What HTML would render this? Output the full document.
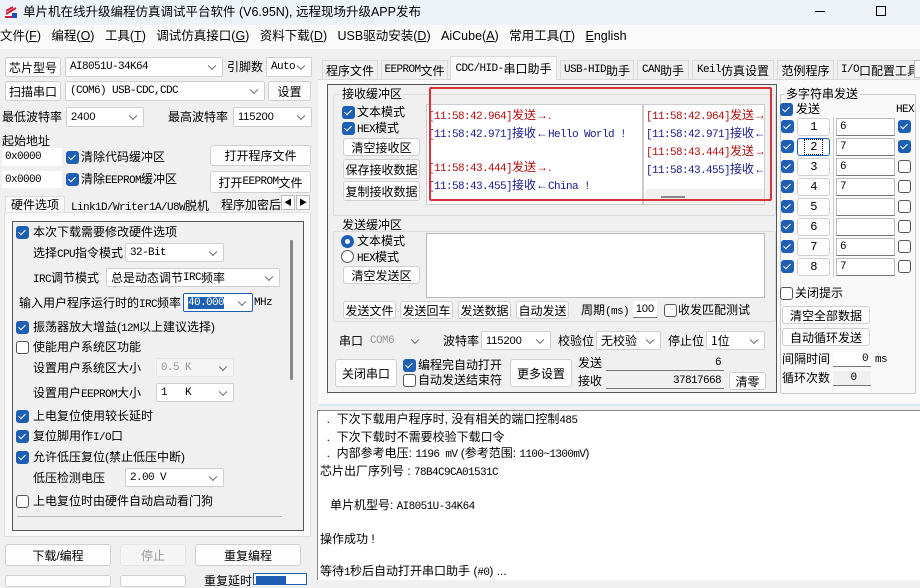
<!DOCTYPE html>
<html><head><meta charset="utf-8"><style>
*{box-sizing:border-box;margin:0;padding:0}
body{width:920px;height:580px;overflow:hidden;background:#f0f0f0;position:relative;font-family:"Liberation Sans","Noto Sans CJK SC",sans-serif;font-size:12px;color:#000}
.a{position:absolute;white-space:nowrap;line-height:1}
.m{font-family:"Liberation Mono","Noto Serif CJK SC",monospace;font-size:11px;letter-spacing:-0.6px}
.n{font-family:"Liberation Mono",monospace;font-size:11px;letter-spacing:-0.6px}
.btn{position:absolute;background:#fdfdfd;border:1px solid #d0d0d0;border-radius:3px;text-align:center;white-space:nowrap;font-size:12px;display:flex;align-items:center;justify-content:center}
.sel{position:absolute;background:#fff;border:1px solid #cfcfcf;border-radius:2px;padding-left:4px;display:flex;align-items:center;white-space:nowrap;font-family:"Liberation Mono","Noto Serif CJK SC",monospace;font-size:11px;letter-spacing:-0.6px}
.sel:after{content:"";position:absolute;right:7px;top:50%;width:5px;height:5px;border-right:1px solid #666;border-bottom:1px solid #666;transform:translateY(-70%) rotate(45deg)}
.dis{background:#f5f5f5;color:#999}
.inp{position:absolute;background:#fff;border:1px solid #bbb;border-bottom-color:#777;padding-left:3px;display:flex;align-items:center;font-family:"Liberation Mono",monospace;font-size:11px;letter-spacing:-0.6px}
.cb{position:absolute;width:13px;height:13px;border-radius:3px;background:#1e5fb4}
.cb:after{content:"";position:absolute;left:4px;top:2px;width:3px;height:6px;border-right:1.5px solid #fff;border-bottom:1.5px solid #fff;transform:rotate(45deg)}
.cb0{position:absolute;width:13px;height:13px;border-radius:3px;background:#fff;border:1px solid #555}
.grp{position:absolute;border:1px solid #dcdcdc;border-radius:2px}
.gl{position:absolute;background:#f0f0f0;padding:0 2px;line-height:1}
.tab{position:absolute;top:60px;height:19px;border:1px solid #dadada;border-bottom:none;background:#f0f0f0;display:flex;align-items:center;justify-content:center;font-size:12px;white-space:nowrap;overflow:hidden}
.w{background:#fff}
.red{color:#b01010}.blu{color:#1a1a8a}
</style></head><body>
<!-- title -->
<div class="a" style="left:0;top:0;width:920px;height:25px;background:#eef3f9"></div>
<svg class="a" style="left:4px;top:5px" width="14" height="14"><path d="M1 12 L13 12 M2 9 L12 3 M2 6 L9 2" stroke="#d02040" stroke-width="2"/><rect x="8" y="8" width="5" height="5" fill="#2050c0"/></svg>
<div class="a" style="left:23px;top:6px;font-size:12.5px">单片机在线升级编程仿真调试平台软件 (V6.95N), 远程现场升级APP发布</div>
<div class="a" style="left:815px;top:11px;width:10px;height:1px;background:#000"></div>
<div class="a" style="left:876px;top:6px;width:10px;height:10px;border:1px solid #000"></div>
<!-- menu -->
<div class="a" style="left:0;top:25px;width:920px;height:24px;background:#fafafa"></div>
<div class="a" style="left:0;top:30px;font-size:12.5px">文件(<u>F</u>)&nbsp;&nbsp;&nbsp;编程(<u>O</u>)&nbsp;&nbsp;&nbsp;工具(<u>T</u>)&nbsp;&nbsp;&nbsp;调试仿真接口(<u>G</u>)&nbsp;&nbsp;&nbsp;资料下载(<u>D</u>)&nbsp;&nbsp;&nbsp;USB驱动安装(<u>D</u>)&nbsp;&nbsp;&nbsp;AiCube(<u>A</u>)&nbsp;&nbsp;&nbsp;常用工具(<u>T</u>)&nbsp;&nbsp;&nbsp;<u>E</u>nglish</div>

<!-- left top -->
<div class="btn" style="left:5px;top:57px;width:56px;height:20px">芯片型号</div>
<div class="sel" style="left:65px;top:57px;width:158px;height:20px">AI8051U-34K64</div>
<div class="a" style="left:227px;top:61px">引脚数</div>
<div class="sel" style="left:266px;top:57px;width:46px;height:20px">Auto</div>
<div class="btn" style="left:5px;top:81px;width:56px;height:20px">扫描串口</div>
<div class="sel" style="left:65px;top:81px;width:200px;height:20px">(COM6) USB-CDC,CDC</div>
<div class="btn" style="left:268px;top:81px;width:43px;height:20px">设置</div>
<div class="a" style="left:2px;top:111px">最低波特率</div>
<div class="sel" style="left:66px;top:107px;width:78px;height:20px;font-family:'Liberation Sans';font-size:11px;letter-spacing:0">2400</div>
<div class="a" style="left:168px;top:111px">最高波特率</div>
<div class="sel" style="left:233px;top:107px;width:79px;height:20px;font-family:'Liberation Sans';font-size:11px;letter-spacing:0">115200</div>
<div class="a" style="left:2px;top:135px">起始地址</div>
<div class="inp" style="left:2px;top:148px;width:60px;height:18px;border:none;background:#fff">0x0000</div>
<div class="cb" style="left:66px;top:151px"></div>
<div class="a" style="left:81px;top:151px">清除代码缓冲区</div>
<div class="btn" style="left:210px;top:145px;width:101px;height:21px">打开程序文件</div>
<div class="inp" style="left:2px;top:171px;width:60px;height:17px;border:none">0x0000</div>
<div class="cb" style="left:66px;top:173px"></div>
<div class="a" style="left:81px;top:173px">清除<span class="m">EEPROM</span>缓冲区</div>
<div class="btn" style="left:210px;top:171px;width:101px;height:22px">打开<span class="m">EEPROM</span>文件</div>
<!-- left tabs -->
<div class="a" style="left:5px;top:196px;width:60px;height:17px;background:#fafafa;border:1px solid #ddd;border-bottom:none;text-align:center;padding-top:2px">硬件选项</div>
<div class="a m" style="left:71px;top:200px">Link1D/Writer1A/U8W<span style="font-size:12px;font-family:'Noto Sans CJK SC';letter-spacing:0">脱机</span></div>
<div class="a" style="left:221px;top:199px;width:60px;overflow:hidden">程序加密后</div>
<div class="a" style="left:281px;top:195px;width:14px;height:15px;border:1px solid #bbb;background:#fff;font-size:8px;text-align:center;padding-top:3px">◀</div>
<div class="a" style="left:296px;top:195px;width:14px;height:15px;border:1px solid #bbb;background:#fff;font-size:8px;text-align:center;padding-top:3px">▶</div>
<div class="a" style="left:4px;top:212px;width:307px;height:325px;background:#fafafa;border:1px solid #e0e0e0"></div>
<div class="a" style="left:12px;top:221px;width:292px;height:310px;border:1px solid #555;background:#f0f0f0"></div>
<div class="a" style="left:290px;top:240px;width:3px;height:140px;background:#888;border-radius:1px"></div>
<div class="cb" style="left:16px;top:226px"></div><div class="a" style="left:33px;top:226px">本次下载需要修改硬件选项</div>
<div class="a" style="left:33px;top:247px">选择<span class="m">CPU</span>指令模式</div><div class="sel" style="left:125px;top:243px;width:99px;height:19px">32-Bit</div>
<div class="a" style="left:33px;top:272px"><span class="m">IRC</span>调节模式</div><div class="sel" style="left:106px;top:268px;width:174px;height:19px;font-family:'Noto Sans CJK SC',sans-serif;font-size:12px;letter-spacing:0">总是动态调节<span class="m">IRC</span>频率</div>
<div class="a" style="left:19px;top:297px">输入用户程序运行时的<span class="m">IRC</span>频率</div>
<div class="sel" style="left:183px;top:293px;width:70px;height:19px;border-color:#1e5fb4"><span style="background:#1e5fb4;color:#fff">40.000</span></div>
<div class="a m" style="left:254px;top:298px">MHz</div>
<div class="cb" style="left:16px;top:321px"></div><div class="a" style="left:33px;top:321px">振荡器放大增益(<span class="m">12M</span>以上建议选择)</div>
<div class="cb0" style="left:16px;top:341px"></div><div class="a" style="left:33px;top:341px">使能用户系统区功能</div>
<div class="a" style="left:33px;top:362px">设置用户系统区大小</div><div class="sel dis" style="left:156px;top:358px;width:78px;height:19px;border-color:#e5e5e5">0.5 K</div>
<div class="a" style="left:33px;top:387px">设置用户<span class="m">EEPROM</span>大小</div><div class="sel" style="left:156px;top:383px;width:78px;height:19px">1&nbsp;&nbsp;&nbsp;K</div>
<div class="cb" style="left:16px;top:410px"></div><div class="a" style="left:33px;top:410px">上电复位使用较长延时</div>
<div class="cb" style="left:16px;top:430px"></div><div class="a" style="left:33px;top:430px">复位脚用作<span class="m">I/O</span>口</div>
<div class="cb" style="left:16px;top:451px"></div><div class="a" style="left:33px;top:451px">允许低压复位(禁止低压中断)</div>
<div class="a" style="left:33px;top:472px">低压检测电压</div><div class="sel" style="left:125px;top:468px;width:99px;height:19px">2.00 V</div>
<div class="cb0" style="left:16px;top:495px"></div><div class="a" style="left:33px;top:495px">上电复位时由硬件自动启动看门狗</div>
<div class="a" style="left:17px;top:516px;width:265px;height:1px;background:#bbb"></div>
<div class="btn" style="left:5px;top:544px;width:106px;height:22px">下载/编程</div>
<div class="btn" style="left:120px;top:544px;width:66px;height:22px;background:#f5f5f5;color:#999;border-color:#e5e5e5">停止</div>
<div class="btn" style="left:195px;top:544px;width:106px;height:22px">重复编程</div>
<div class="btn" style="left:5px;top:575px;width:106px;height:12px"></div>
<div class="btn" style="left:120px;top:575px;width:66px;height:12px"></div>
<div class="a" style="left:204px;top:575px">重复延时</div>
<div class="a" style="left:253px;top:573px;width:54px;height:12px;background:#fff;border:1px solid #1e5fb4"><span style="display:block;margin:2px;width:30px;height:8px;background:#1e5fb4"></span></div>

<!-- right tabs -->
<div class="a" style="left:318px;top:79px;width:602px;height:326px;background:#f9f9f9;border-top:1px solid #dadada"></div>
<div class="tab" style="left:322px;width:56px">程序文件</div>
<div class="tab" style="left:381px;width:67px"><span class="m">EEPROM</span>文件</div>
<div class="tab" style="left:450px;top:56px;width:107px;height:24px;background:#f9f9f9"><span class="m">CDC/HID-</span>串口助手</div>
<div class="tab" style="left:560px;width:74px"><span class="m">USB-HID</span>助手</div>
<div class="tab" style="left:637px;width:52px"><span class="m">CAN</span>助手</div>
<div class="tab" style="left:692px;width:82px"><span class="m">Keil</span>仿真设置</div>
<div class="tab" style="left:777px;width:57px">范例程序</div>
<div class="tab" style="left:837px;width:78px;justify-content:flex-start;padding-left:3px"><span class="m">I/O</span>口配置工具</div>
<div class="a" style="left:914px;top:60px;width:8px;height:18px;border:1px solid #bbb;background:#fff"></div>

<div class="a" style="left:327px;top:84px;width:450px;height:309px;border:1px solid #555;background:#f0f0f0"></div>
<!-- receive group -->
<div class="grp" style="left:333px;top:94px;width:443px;height:122px"></div>
<div class="gl" style="left:340px;top:88px">接收缓冲区</div>
<div class="cb" style="left:342px;top:106px"></div><div class="a" style="left:357px;top:106px">文本模式</div>
<div class="cb" style="left:342px;top:122px"></div><div class="a" style="left:357px;top:122px"><span class="m">HEX</span>模式</div>
<div class="btn" style="left:343px;top:138px;width:77px;height:18px">清空接收区</div>
<div class="btn" style="left:343px;top:159px;width:77px;height:20px">保存接收数据</div>
<div class="btn" style="left:343px;top:181px;width:77px;height:20px">复制接收数据</div>
<div class="a w" style="left:426px;top:104px;width:217px;height:101px;border:1px solid #ccc"></div>
<div class="a w" style="left:643px;top:104px;width:122px;height:101px;border:1px solid #ccc"></div>
<div class="a" style="left:646px;top:189px;width:118px;height:14px;background:#f0f0f0"></div>
<div class="a" style="left:661px;top:196px;width:24px;height:2px;background:#888"></div>
<div class="a" style="left:428px;top:107px;line-height:16px;font-size:12px"><span class="red"><span class="n">[11:58:42.964]</span>发送→.</span><br><span class="blu"><span class="n">[11:58:42.971]</span>接收←<span class="n">Hello World !</span></span><br><br><span class="red"><span class="n">[11:58:43.444]</span>发送→.</span><br><span class="blu"><span class="n">[11:58:43.455]</span>接收←<span class="n">China !</span></span></div>
<div class="a" style="left:646px;top:107px;line-height:16px;width:117px;overflow:hidden;font-size:12px"><span class="red"><span class="n">[11:58:42.964]</span>发送→</span><br><span class="blu"><span class="n">[11:58:42.971]</span>接收←</span><br><span class="red"><span class="n">[11:58:43.444]</span>发送→</span><br><span class="blu"><span class="n">[11:58:43.455]</span>接收←</span></div>
<div class="a" style="left:429px;top:87px;width:343px;height:114px;border:2px solid #d9303a;border-radius:2px"></div>
<!-- send group -->
<div class="grp" style="left:333px;top:231px;width:443px;height:91px"></div>
<div class="gl" style="left:340px;top:219px">发送缓冲区</div>
<div class="a" style="left:341px;top:235px;width:13px;height:13px;border-radius:50%;background:#1e5fb4"><span style="position:absolute;left:4px;top:4px;width:5px;height:5px;border-radius:50%;background:#fff"></span></div>
<div class="a" style="left:357px;top:235px">文本模式</div>
<div class="a" style="left:341px;top:250px;width:13px;height:13px;border-radius:50%;border:1px solid #555;background:#fff"></div>
<div class="a" style="left:357px;top:251px"><span class="m">HEX</span>模式</div>
<div class="btn" style="left:343px;top:266px;width:77px;height:18px">清空发送区</div>
<div class="a w" style="left:426px;top:233px;width:339px;height:65px;border:1px solid #bbb"></div>
<div class="btn" style="left:343px;top:301px;width:53px;height:18px">发送文件</div>
<div class="btn" style="left:400px;top:301px;width:53px;height:18px">发送回车</div>
<div class="btn" style="left:458px;top:301px;width:53px;height:18px">发送数据</div>
<div class="btn" style="left:516px;top:301px;width:53px;height:18px">自动发送</div>
<div class="a" style="left:581px;top:304px">周期<span class="m">(ms)</span></div>
<div class="inp" style="left:633px;top:301px;width:24px;height:17px;justify-content:center;padding:0;border:none;border-bottom:1px solid #777;font-family:'Liberation Sans';font-size:11px;letter-spacing:0">100</div>
<div class="cb0" style="left:664px;top:304px"></div><div class="a" style="left:678px;top:304px">收发匹配测试</div>
<!-- serial row -->
<div class="a" style="left:339px;top:335px">串口</div>
<div class="sel dis" style="left:366px;top:331px;width:59px;height:19px;border:none;background:#f0f0f0">COM6</div>
<div class="a" style="left:443px;top:335px">波特率</div>
<div class="sel" style="left:481px;top:331px;width:70px;height:19px;font-family:'Liberation Sans';font-size:11px;letter-spacing:0">115200</div>
<div class="a" style="left:558px;top:335px">校验位</div>
<div class="sel" style="left:596px;top:331px;width:65px;height:19px;font-family:'Noto Sans CJK SC',sans-serif;font-size:12px;letter-spacing:0">无校验</div>
<div class="a" style="left:668px;top:335px">停止位</div>
<div class="sel" style="left:706px;top:331px;width:59px;height:19px;font-family:'Noto Sans CJK SC',sans-serif;font-size:12px;letter-spacing:0">1位</div>
<div class="btn" style="left:335px;top:359px;width:62px;height:28px">关闭串口</div>
<div class="cb" style="left:403px;top:359px"></div><div class="a" style="left:418px;top:359px">编程完自动打开</div>
<div class="cb0" style="left:403px;top:374px"></div><div class="a" style="left:418px;top:374px">自动发送结束符</div>
<div class="btn" style="left:510px;top:359px;width:62px;height:28px">更多设置</div>
<div class="a" style="left:578px;top:357px">发送</div>
<div class="a" style="left:578px;top:375px">接收</div>
<div class="inp" style="left:606px;top:356px;width:118px;height:15px;justify-content:flex-end;padding-right:3px;border:none;border-bottom:1px solid #777;background:#f0f0f0">6</div>
<div class="inp" style="left:606px;top:374px;width:118px;height:15px;justify-content:flex-end;padding-right:3px;border:none;border-bottom:1px solid #777;background:#f0f0f0">37817668</div>
<div class="btn" style="left:729px;top:372px;width:37px;height:18px">清零</div>

<!-- multi string -->
<div class="grp" style="left:780px;top:94px;width:136px;height:300px;border-color:#ccc"></div>
<div class="gl" style="left:784px;top:88px">多字符串发送</div>
<div class="cb" style="left:780px;top:103px"></div><div class="a" style="left:796px;top:103px">发送</div>
<div class="a m" style="left:896px;top:105px">HEX</div>
<div class="a" style="left:833px;top:117px;width:1px;height:160px;background:#ccc"></div>

<div class="cb" style="left:781px;top:120px"></div><div class="btn m" style="left:797px;top:118px;width:33px;height:18px">1</div><div class="inp" style="left:836px;top:118px;width:59px;height:18px">6</div><div class="cb" style="left:898px;top:120px"></div>
<div class="cb" style="left:781px;top:140px"></div><div class="btn m" style="left:797px;top:138px;width:33px;height:18px;border-color:#1e5fb4"><span style="border:1px dotted #000;padding:0 5px">2</span></div><div class="inp" style="left:836px;top:138px;width:59px;height:18px">7</div><div class="cb" style="left:898px;top:140px"></div>
<div class="cb" style="left:781px;top:160px"></div><div class="btn m" style="left:797px;top:158px;width:33px;height:18px">3</div><div class="inp" style="left:836px;top:158px;width:59px;height:18px">6</div><div class="cb0" style="left:898px;top:160px"></div>
<div class="cb" style="left:781px;top:180px"></div><div class="btn m" style="left:797px;top:178px;width:33px;height:18px">4</div><div class="inp" style="left:836px;top:178px;width:59px;height:18px">7</div><div class="cb0" style="left:898px;top:180px"></div>
<div class="cb" style="left:781px;top:200px"></div><div class="btn m" style="left:797px;top:198px;width:33px;height:18px">5</div><div class="inp" style="left:836px;top:198px;width:59px;height:18px"></div><div class="cb0" style="left:898px;top:200px"></div>
<div class="cb" style="left:781px;top:220px"></div><div class="btn m" style="left:797px;top:218px;width:33px;height:18px">6</div><div class="inp" style="left:836px;top:218px;width:59px;height:18px"></div><div class="cb0" style="left:898px;top:220px"></div>
<div class="cb" style="left:781px;top:240px"></div><div class="btn m" style="left:797px;top:238px;width:33px;height:18px">7</div><div class="inp" style="left:836px;top:238px;width:59px;height:18px">6</div><div class="cb0" style="left:898px;top:240px"></div>
<div class="cb" style="left:781px;top:260px"></div><div class="btn m" style="left:797px;top:258px;width:33px;height:18px">8</div><div class="inp" style="left:836px;top:258px;width:59px;height:18px">7</div><div class="cb0" style="left:898px;top:260px"></div>
<div class="cb0" style="left:780px;top:287px"></div><div class="a" style="left:795px;top:287px">关闭提示</div>
<div class="btn" style="left:782px;top:306px;width:88px;height:18px">清空全部数据</div>
<div class="btn" style="left:782px;top:328px;width:88px;height:18px">自动循环发送</div>
<div class="a" style="left:782px;top:353px">间隔时间</div>
<div class="inp" style="left:833px;top:352px;width:38px;height:15px;justify-content:flex-end;padding-right:3px;border:none;border-bottom:1px solid #777">0</div>
<div class="a m" style="left:875px;top:355px">ms</div>
<div class="a" style="left:782px;top:372px">循环次数</div>
<div class="inp" style="left:833px;top:371px;width:38px;height:15px;justify-content:center;border:none;background:#f0f0f0;border-bottom:1px solid #777">0</div>

<!-- log -->
<div class="a" style="left:318px;top:404px;width:602px;height:2px;background:#dce9ee"></div>
<div class="a w" style="left:317px;top:410px;width:603px;height:170px;border-left:1px solid #888;border-top:1px solid #888"></div>
<div class="a" style="left:320px;top:411px;line-height:16px;font-size:12px">
&nbsp;&nbsp;.&nbsp;&nbsp;下次下载用户程序时, 没有相关的端口控制<span class="n">485</span><br>
&nbsp;&nbsp;.&nbsp;&nbsp;下次下载时不需要校验下载口令<br>
&nbsp;&nbsp;.&nbsp;&nbsp;内部参考电压: <span class="n">1196 mV</span> (参考范围: <span class="n">1100~1300mV</span>)<br>
芯片出厂序列号 : <span class="n">78B4C9CA01531C</span><br><br>
&nbsp;&nbsp;&nbsp;单片机型号: <span class="n">AI8051U-34K64</span><br><br>
操作成功 !<br><br>
等待<span class="n">1</span>秒后自动打开串口助手 (<span class="n">#0</span>) ...
</div>
</body></html>
